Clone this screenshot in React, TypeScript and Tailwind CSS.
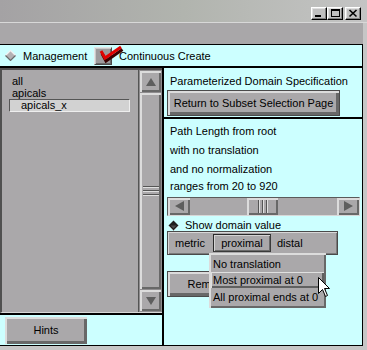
import React from "react";

function WinBtn({ kind }: { kind: "min" | "max" | "close" }) {
  return (
    <div className="w-[16px] h-[13px] bg-[#c0c0c0] border border-t-white border-l-white border-r-black border-b-black shadow-[inset_-1px_-1px_0_#808080,inset_1px_1px_0_#dfdfdf]">
      <svg width="14" height="11" viewBox="0 0 14 11" className="block">
        {kind === "min" && <rect x="3" y="7" width="6" height="2" fill="#000" />}
        {kind === "max" && (
          <g fill="none" stroke="#000">
            <rect x="3.5" y="1.5" width="8" height="7" />
            <line x1="3" y1="2.5" x2="12" y2="2.5" />
          </g>
        )}
        {kind === "close" && (
          <g stroke="#000" strokeWidth="1.6">
            <line x1="3.5" y1="2" x2="10.5" y2="8.5" />
            <line x1="10.5" y1="2" x2="3.5" y2="8.5" />
          </g>
        )}
      </svg>
    </div>
  );
}

function DiamondOff() {
  return (
    <svg width="11" height="11" viewBox="0 0 11 11" className="block">
      <polygon points="5.5,0.5 10.5,5.5 5.5,10.5 0.5,5.5" fill="#b4b2b4" />
      <polyline points="0.5,5.5 5.5,0.5 10.5,5.5" fill="none" stroke="#f0f0f0" strokeWidth="1.2" />
      <polyline points="0.5,5.5 5.5,10.5 10.5,5.5" fill="none" stroke="#6a6a6a" strokeWidth="1.2" />
    </svg>
  );
}

function DiamondOn() {
  return (
    <svg width="11" height="11" viewBox="0 0 11 11" className="block">
      <polygon points="5.5,0.5 10.5,5.5 5.5,10.5 0.5,5.5" fill="#1e1e1e" />
      <polygon points="2.5,5.5 8.5,5.5 5.5,8.5" fill="#4a4a4a" />
      <polyline points="1,6 5.5,10.5 10,6" fill="none" stroke="#9a9a9a" strokeWidth="1" />
    </svg>
  );
}

function Arrow({ dir }: { dir: "up" | "down" | "left" | "right" }) {
  const pts: Record<string, string> = {
    up: "10,6 5,14 15,14",
    down: "5,6 15,6 10,14",
    left: "6,9 15,4 15,14",
    right: "15,9 6,4 6,14",
  };
  return (
    <svg width="20" height="19" viewBox="0 0 20 19" className="block">
      <polygon points={pts[dir]} fill="#5e5e5e" />
    </svg>
  );
}

export default function App() {
  return (
    <div className="relative w-[367px] h-[350px] overflow-hidden bg-[#c6c6c6] text-[11px] text-black font-['Liberation_Sans',Arial,sans-serif]">
      {/* title bar */}
      <div className="h-[22px] bg-linear-to-r from-[#a4a2a4] via-[#b1b4ae] to-[#c4c4c4] flex justify-end items-start pt-[7px] pr-[6px]">
        <WinBtn kind="min" />
        <WinBtn kind="max" />
        <div className="w-[2px]" />
        <WinBtn kind="close" />
      </div>
      <div className="h-px bg-[#d8d8d8]" />

      <div className="w-[363px]">
        {/* menu bar */}
        <div className="h-[22px] bg-[#a9a7a9] border-b border-black" />

        <div className="border-r border-black">
          {/* toolbar */}
          <div className="h-[23px] bg-[#ccffff] border-b-2 border-black flex items-center">
            <div className="w-[94px] flex items-center pl-[5px]">
              <DiamondOff />
              <span className="ml-[7px] leading-[14px]">Management</span>
            </div>
            <div className="relative w-[18px] h-[18px] bg-[#9c9a9c] border border-t-[#e4e4e4] border-l-[#e4e4e4] border-r-[#4a4a4a] border-b-[#4a4a4a] shadow-[inset_1px_1px_0_#c8c8c8,inset_-1px_-1px_0_#6a6a6a]">
              <svg width="30" height="22" viewBox="0 0 30 22" className="absolute left-[-1px] top-[-5px] overflow-visible">
                <polyline points="7,9 11,16.5 27.5,5" fill="none" stroke="#3a0000" strokeWidth="3" strokeLinejoin="miter" transform="translate(1,1.5)" />
                <polyline points="7,8 11,15 27,4" fill="none" stroke="#e00000" strokeWidth="3" strokeLinejoin="miter" />
              </svg>
            </div>
            <span className="ml-[7px] leading-[14px]">Continuous Create</span>
          </div>

          {/* content */}
          <div className="h-[278px] border-b border-black flex">
            {/* left column */}
            <div className="w-[162px] flex flex-col">
              <div className="h-[245px] border-t-2 border-l-2 border-t-[#505050] border-l-[#505050] border-b border-b-[#d8d8d8] flex">
                <div className="w-[136px] bg-[#aaa8aa] pt-[5px]">
                  <div className="pl-[10px] h-[12px] leading-[12px]">all</div>
                  <div className="pl-[10px] h-[12px] leading-[12px]">apicals</div>
                  <div className="ml-[7px] w-[121px] h-[13px] leading-[11px] bg-[#d2d2d2] border-t border-l border-t-[#555] border-l-[#555] border-b border-r border-b-[#eeeeee] border-r-[#eeeeee] pl-[11px]">
                    apicals_x
                  </div>
                </div>
                <div className="w-px bg-[#555]" />
                <div className="w-[23px] bg-[#8e8c8e] flex flex-col p-px gap-px">
                  <div className="h-[21px] bg-[#aaa8aa] shadow-[inset_2px_2px_0_#dcdcdc,inset_-2px_-2px_0_#686868] flex items-center justify-center">
                    <Arrow dir="up" />
                  </div>
                  <div className="flex-1 bg-[#aaa8aa] shadow-[inset_2px_2px_0_#dcdcdc,inset_-2px_-2px_0_#686868] flex flex-col items-center justify-center gap-[2px]">
                    {[0, 1, 2].map((i) => (
                      <div key={i} className="w-[16px]">
                        <div className="h-px bg-[#555]" />
                        <div className="h-px bg-[#e0e0e0]" />
                      </div>
                    ))}
                  </div>
                  <div className="h-[21px] bg-[#aaa8aa] shadow-[inset_2px_2px_0_#dcdcdc,inset_-2px_-2px_0_#686868] flex items-center justify-center">
                    <Arrow dir="down" />
                  </div>
                </div>
              </div>
              <div className="h-[2px] bg-black" />
              <div className="h-[30px] bg-[#ccffff] pl-[5px] pt-[2px]">
                <div className="w-[82px] h-[27px] bg-[#aaa8aa] shadow-[inset_2px_2px_0_#dcdcdc,inset_-3px_-3px_0_#686868] flex items-center justify-center">
                  Hints
                </div>
              </div>
            </div>

            <div className="w-[2px] bg-black" />

            {/* right column */}
            <div className="flex-1 bg-[#ccffff] flex flex-col">
              <div className="h-[49px] pt-[6px]">
                <div className="pl-[6px] h-[14px] leading-[14px]">Parameterized Domain Specification</div>
                <div className="ml-[3px] mt-[2px] w-[173px] h-[26px] bg-[#aaa8aa] border border-[#4a4a4a] shadow-[inset_2px_2px_0_#dcdcdc,inset_-3px_-3px_0_#686868] flex items-center justify-center">
                  Return to Subset Selection Page
                </div>
              </div>
              <div className="h-[2px] bg-black" />
              <div className="pl-[3px] pt-[5px] flex flex-col">
                <div className="pl-[3px] h-[14px] leading-[14px]">Path Length from root</div>
                <div className="pl-[3px] mt-[5px] h-[14px] leading-[14px]">with no translation</div>
                <div className="pl-[3px] mt-[5px] h-[14px] leading-[14px]">and no normalization</div>
                <div className="pl-[3px] mt-[3px] h-[14px] leading-[14px]">ranges from 20 to 920</div>

                {/* horizontal scrollbar */}
                <div className="mt-[4px] w-[193px] h-[19px] bg-[#aaa8aa] border-t border-l border-t-[#5a5a5a] border-l-[#5a5a5a] border-b border-r border-b-[#d8d8d8] border-r-[#d8d8d8] flex">
                  <div className="w-[22px] h-full shadow-[inset_2px_2px_0_#dcdcdc,inset_-2px_-2px_0_#686868] flex items-center justify-center">
                    <Arrow dir="left" />
                  </div>
                  <div className="w-[57px]" />
                  <div className="w-[31px] h-full shadow-[inset_2px_2px_0_#dcdcdc,inset_-2px_-2px_0_#686868] flex items-center justify-center gap-[2px]">
                    {[0, 1, 2].map((i) => (
                      <div key={i} className="h-[13px] flex">
                        <div className="w-px bg-[#555]" />
                        <div className="w-px bg-[#e0e0e0]" />
                      </div>
                    ))}
                  </div>
                  <div className="flex-1" />
                  <div className="w-[22px] h-full shadow-[inset_2px_2px_0_#dcdcdc,inset_-2px_-2px_0_#686868] flex items-center justify-center">
                    <Arrow dir="right" />
                  </div>
                </div>

                <div className="mt-[2px] h-[14px] flex items-center">
                  <div className="ml-[1px]">
                    <DiamondOn />
                  </div>
                  <span className="ml-[6px] leading-[14px]">Show domain value</span>
                </div>

                <div className="mt-[-1px] w-[171px] h-[24px] bg-[#aaa8aa] border border-[#4a4a4a] shadow-[inset_1px_1px_0_#d8d8d8,inset_-1px_-1px_0_#7a7a7a] flex items-center">
                  <div className="w-[45px] pl-[7px]">metric</div>
                  <div className="w-[58px] h-[18px] border border-t-[#2a2a2a] border-l-[#2a2a2a] border-r-[#3a3a3a] border-b-[#3a3a3a] shadow-[inset_1px_1px_0_#d4d4d4,inset_-1px_-1px_0_#6a6a6a] flex items-center justify-center">
                    proximal
                  </div>
                  <div className="ml-[6px]">distal</div>
                </div>

                <div className="mt-[16px] w-[82px] h-[26px] bg-[#aaa8aa] border border-[#4a4a4a] shadow-[inset_2px_2px_0_#dcdcdc,inset_-3px_-3px_0_#686868] flex items-center justify-center">
                  Remove
                </div>
              </div>
            </div>
          </div>
        </div>
      </div>

      {/* popup menu */}
      <div className="absolute left-[209px] top-[253px] w-[117px] h-[55px] bg-[#aaa8aa] shadow-[inset_2px_2px_0_#dcdcdc,inset_-2px_-2px_0_#686868] pt-[3px] px-[2px]">
        <div className="h-[16px] leading-[16px] pl-[2px]">No translation</div>
        <div className="h-[16px] leading-[16px] pl-[2px] shadow-[inset_1px_1px_0_#e0e0e0,inset_-2px_-2px_0_#606060]">
          Most proximal at 0
        </div>
        <div className="h-[16px] leading-[16px] pl-[2px] mt-[1px]">All proximal ends at 0</div>
      </div>

      {/* mouse cursor */}
      <svg width="13" height="21" viewBox="0 0 13 21" className="absolute left-[318px] top-[277px]">
        <path d="M0.5 0.5 L0.5 16.5 L4.5 12.5 L7.5 19.5 L9.5 18.5 L6.5 11.5 L11.5 11.5 Z" fill="#fff" stroke="#000" strokeWidth="1" strokeLinejoin="miter" />
      </svg>
    </div>
  );
}
